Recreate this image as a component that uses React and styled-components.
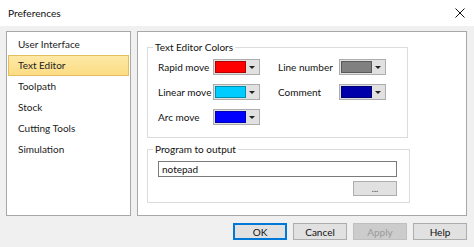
import React, { useState } from "react";
import styled, { createGlobalStyle } from "styled-components";

const GlobalStyle = createGlobalStyle`
  html, body {
    margin: 0;
    padding: 0;
    background: #f0f0f0;
  }
  * {
    box-sizing: border-box;
  }
`;

const Window = styled.div`
  width: 474px;
  height: 247px;
  background: #f0f0f0;
  display: flex;
  flex-direction: column;
  font-family: Lato, "Noto Sans", sans-serif;
  font-size: 10px;
  color: #000;
  overflow: hidden;
`;

const TitleBar = styled.div`
  height: 26px;
  background: #fff;
  display: flex;
  align-items: center;
  justify-content: space-between;
  padding: 0 9px 0 8px;
  font-size: 10.2px;
  color: #111;
`;

const CloseIcon = styled.svg`
  width: 10px;
  height: 10px;
`;

const Body = styled.div`
  display: flex;
  gap: 6px;
  padding: 5px 7px 0 6px;
`;

const PageList = styled.ul`
  list-style: none;
  margin: 0;
  width: 125px;
  height: 185px;
  padding: 2px 1px;
  background: #fff;
  border: 1px solid #a8a8a8;
`;

const PageItem = styled.li`
  height: 21px;
  line-height: 19px;
  padding-left: 9px;
  border: 1px solid ${(p) => (p.$selected ? "#e2be5c" : "transparent")};
  background: ${(p) => (p.$selected ? "linear-gradient(#fde9a6, #fcdc84)" : "transparent")};
  color: #222;
  cursor: default;
`;

const Panel = styled.div`
  width: 330px;
  height: 185px;
  background: #fff;
  border: 1px solid #a8a8a8;
  padding: 9px 0 0 9px;
  display: flex;
  flex-direction: column;
  gap: 5px;
`;

const Group = styled.fieldset`
  margin: 0;
  width: 261px;
  height: ${(p) => p.$height}px;
  border: 1px solid #dcdcdc;
  padding: 0 10px;
`;

const Legend = styled.legend`
  padding: 0 2px;
  margin-left: -5px;
  color: #111;
`;

const ColorGrid = styled.div`
  display: grid;
  grid-template-columns: 55px 47px 79px 47px;
  row-gap: 9px;
  padding-top: 6px;
  align-items: center;
`;

const ColorLabel = styled.span`
  white-space: nowrap;
  padding-left: ${(p) => (p.$second ? 18 : 0)}px;
  color: #111;
`;

const SwatchButton = styled.div`
  width: 47px;
  height: 16px;
  border: 1px solid #adadad;
  background: #e1e1e1;
  display: flex;
  align-items: center;
  padding: 1px;
`;

const Swatch = styled.div`
  width: 31px;
  height: 12px;
  background: ${(p) => p.$color};
  border: 1px solid rgba(0, 0, 0, 0.3);
`;

const Arrow = styled.div`
  flex: 1;
  display: flex;
  justify-content: center;
  &::after {
    content: "";
    border-left: 3px solid transparent;
    border-right: 3px solid transparent;
    border-top: 3px solid #222;
  }
`;

const ProgramBody = styled.div`
  display: flex;
  flex-direction: column;
  align-items: flex-end;
  gap: 4px;
  padding: 6px 2px 0 0;
`;

const TextInput = styled.input`
  width: 239px;
  height: 16px;
  border: 1px solid #7a7a7a;
  font: inherit;
  padding: 0 3px;
  outline: none;
  background: #fff;
  color: #111;
`;

const SmallButton = styled.button`
  width: 44px;
  height: 15px;
  border: 1px solid #adadad;
  background: #e1e1e1;
  font: inherit;
  font-size: 9px;
  line-height: 8px;
  padding: 0;
  color: #444;
`;

const Footer = styled.div`
  display: flex;
  justify-content: flex-end;
  gap: 6px;
  padding: 7px 7px 0 0;
`;

const DialogButton = styled.button`
  width: 54px;
  height: 17px;
  font: inherit;
  padding: 0;
  border: 1px solid ${(p) => (p.$default ? "#0078d7" : p.disabled ? "#bfbfbf" : "#adadad")};
  background: ${(p) => (p.disabled ? "#cccccc" : "#e1e1e1")};
  color: ${(p) => (p.disabled ? "#9a9a9a" : "#111")};
  box-shadow: ${(p) => (p.$default ? "inset 0 0 0 1px #0078d7" : "none")};
`;

const pages = ["User Interface", "Text Editor", "Toolpath", "Stock", "Cutting Tools", "Simulation"];

const colors = [
  ["Rapid move", "#ff0000", "Line number", "#808080"],
  ["Linear move", "#00ccff", "Comment", "#0000aa"],
  ["Arc move", "#0000ff", null, null],
];

const ColorPick = ({ color }) => (
  <SwatchButton>
    <Swatch $color={color} />
    <Arrow />
  </SwatchButton>
);

export default function App() {
  const [selected, setSelected] = useState(1);
  const [program, setProgram] = useState("notepad");

  return (
    <Window>
      <GlobalStyle />
      <TitleBar>
        <span>Preferences</span>
        <CloseIcon viewBox="0 0 10 10">
          <path d="M0.5 0.5 L9.5 9.5 M9.5 0.5 L0.5 9.5" stroke="#111" strokeWidth="1" />
        </CloseIcon>
      </TitleBar>
      <Body>
        <PageList>
          {pages.map((p, i) => (
            <PageItem key={p} $selected={i === selected} onClick={() => setSelected(i)}>
              {p}
            </PageItem>
          ))}
        </PageList>
        <Panel>
          <Group $height={97}>
            <Legend>Text Editor Colors</Legend>
            <ColorGrid>
              {colors.map(([l1, c1, l2, c2]) => (
                <React.Fragment key={l1}>
                  <ColorLabel>{l1}</ColorLabel>
                  <ColorPick color={c1} />
                  {l2 ? <ColorLabel $second>{l2}</ColorLabel> : <span />}
                  {c2 ? <ColorPick color={c2} /> : <span />}
                </React.Fragment>
              ))}
            </ColorGrid>
          </Group>
          <Group $height={60}>
            <Legend>Program to output</Legend>
            <ProgramBody>
              <TextInput value={program} onChange={(e) => setProgram(e.target.value)} />
              <SmallButton>...</SmallButton>
            </ProgramBody>
          </Group>
        </Panel>
      </Body>
      <Footer>
        <DialogButton $default>OK</DialogButton>
        <DialogButton>Cancel</DialogButton>
        <DialogButton disabled>Apply</DialogButton>
        <DialogButton>Help</DialogButton>
      </Footer>
    </Window>
  );
}
